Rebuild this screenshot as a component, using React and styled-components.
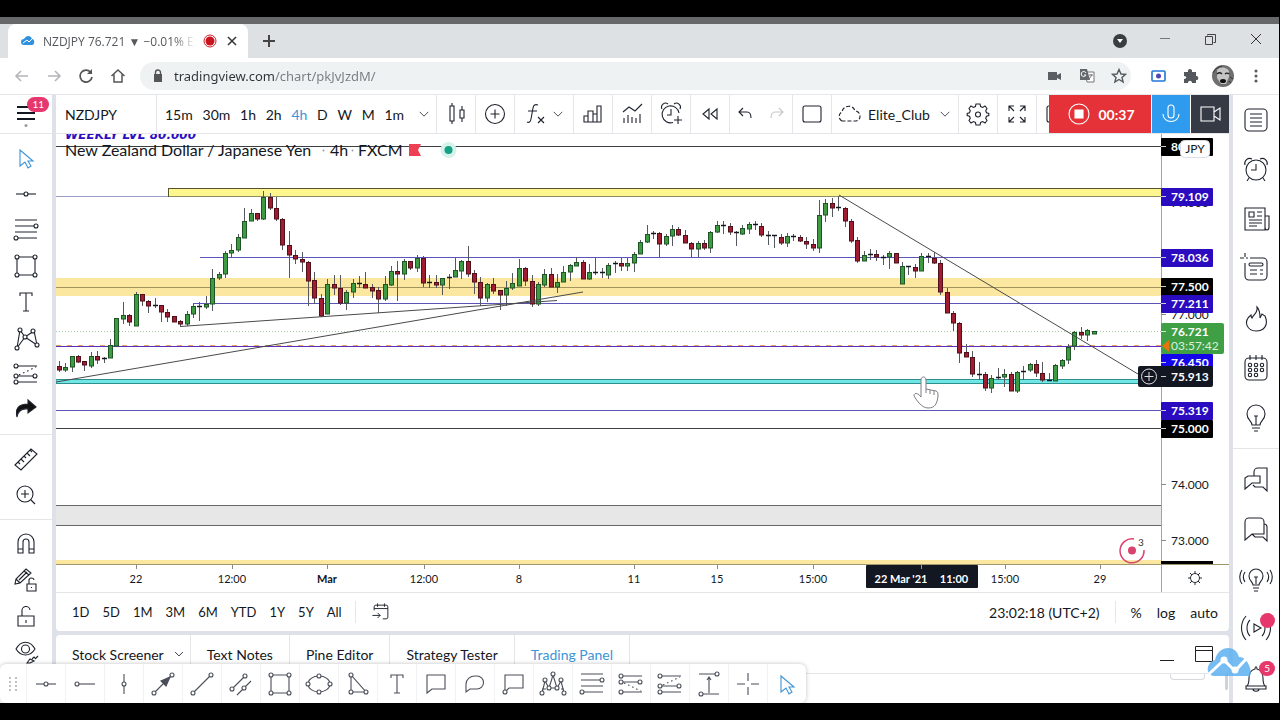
import React from 'react';
import styled, { createGlobalStyle } from 'styled-components';

const colors = {
  text: '#131722',
  blue: '#3d94d6',
  gutter: '#dee2e8',
  line: '#e4e6ea',
  pink: '#e6386c',
  candleUp: '#3f9a44',
  candleDown: '#a01c30',
  level: '#2a0bbf',
};

const GlobalStyle = createGlobalStyle`
  * {
    box-sizing: border-box;
  }

  body {
    margin: 0;
    background: #000;
    color: ${colors.text};
    font-family: Lato, 'Liberation Sans', sans-serif;
    font-size: 14px;
  }

  button {
    margin: 0;
    padding: 0;
    border: 0;
    background: none;
    color: inherit;
    font: inherit;
    cursor: pointer;
  }
`;

const Screen = styled.div`
  display: flex;
  flex-direction: column;
  height: 100vh;
  padding: 17px 1px 17px 0;
  overflow: hidden;
`;

/* ---------- browser ---------- */

const Backdrop = styled.div`
  flex: none;
  height: 7px;
  background: #66696a;
`;

const TabStrip = styled.div`
  display: flex;
  flex: none;
  align-items: center;
  height: 34px;
  padding-left: 8px;
  background: #dee1e3;
`;

const BrowserTab = styled.div`
  display: flex;
  align-items: center;
  width: 240px;
  height: 34px;
  padding: 0 9px 0 13px;
  gap: 8px;
  background: #fff;
  border-radius: 8px 8px 0 0;
  color: #55585c;
  font-family: 'Open Sans', sans-serif;
  font-size: 12px;

  button {
    display: flex;
  }
`;

const TabTitle = styled.span`
  flex: 1;
  overflow: hidden;
  white-space: nowrap;
  mask-image: linear-gradient(90deg, #000 86%, transparent);
`;

const NewTab = styled.button`
  display: flex;
  margin-left: 13px;
`;

const WindowButtons = styled.div`
  display: flex;
  align-items: center;
  gap: 30px;
  margin-left: auto;
  padding-right: 15px;

  button {
    display: flex;
  }
`;

const AddressRow = styled.div`
  display: flex;
  flex: none;
  align-items: center;
  height: 37px;
  padding: 0 13px;
  background: #fff;
  border-bottom: 1px solid ${colors.line};
`;

const NavButtons = styled.div`
  display: flex;
  gap: 14px;

  button {
    display: flex;
  }
`;

const AddressBar = styled.div`
  display: flex;
  flex: 1;
  align-items: center;
  height: 28px;
  margin-left: 13px;
  padding: 0 2px 0 10px;
  gap: 8px;
  background: #eff2f3;
  border-radius: 14px;
`;

const AddressInput = styled.input`
  flex: 1;
  min-width: 0;
  padding: 0;
  border: 0;
  outline: 0;
  background: linear-gradient(90deg, #303336 101px, #777b80 101px);
  background-clip: text;
  color: transparent;
  font-family: 'Noto Sans', sans-serif;
  font-size: 13px;
`;

const BarActions = styled.div`
  display: flex;
  gap: 12px;

  button {
    display: flex;
  }
`;

const Extensions = styled.div`
  display: flex;
  align-items: center;
  gap: 12px;
  margin-left: 17px;

  button {
    display: flex;
  }
`;

/* ---------- chart page ---------- */

const Page = styled.div`
  position: relative;
  display: flex;
  flex: 1;
  gap: 4px;
  min-height: 0;
  background: ${colors.gutter};
`;

const Side = styled.div`
  display: flex;
  flex-direction: column;
  flex: none;
  width: ${({ $width }) => $width}px;
  min-height: 0;
  background: #fff;
`;

const MenuButton = styled.button`
  position: relative;
  height: 39px;
  border-bottom: 1px solid ${colors.line} !important;
`;

const Badge = styled.span`
  position: absolute;
  top: ${({ $top }) => $top}px;
  right: ${({ $right }) => $right}px;
  min-width: 15px;
  height: 15px;
  padding: 0 5px;
  border-radius: 8px;
  background: ${colors.pink};
  color: #fff;
  font-size: 10px;
  line-height: 15px;
`;

const LeftTools = styled.div`
  display: flex;
  flex-direction: column;
  padding-top: 6px;
`;

const SideButton = styled.button`
  position: relative;
  display: flex;
  flex: 0 1 ${({ $height }) => $height}px;
  align-items: center;
  justify-content: center;
  min-height: 0;
`;

const SideLine = styled.hr`
  width: 100%;
  margin: ${({ $gap }) => $gap}px 0;
  border: 0;
  border-top: 1px solid ${colors.line};
`;

const Center = styled.div`
  display: flex;
  flex: 1;
  flex-direction: column;
  gap: 4px;
  min-width: 0;
  min-height: 0;
`;

const ChartPanel = styled.div`
  display: flex;
  flex: 1;
  flex-direction: column;
  min-height: 0;
  background: #fff;
  border-radius: 0 0 4px 4px;
`;

const TopBar = styled.div`
  position: relative;
  display: flex;
  flex: none;
  height: 39px;
  overflow: hidden;
  border-bottom: 1px solid ${colors.line};
`;

const Cell = styled.div`
  display: flex;
  flex: none;
  align-items: center;
  justify-content: ${({ $spread }) => ($spread ? 'space-between' : 'center')};
  width: ${({ $width }) => $width}px;
  padding: ${({ $spread }) => ($spread ? '0 2px 0 8px' : '0')};
  border-right: 1px solid ${colors.line};

  button {
    display: flex;
    align-items: center;
    justify-content: center;
  }
`;

const SymbolButton = styled.button`
  flex: none;
  width: 101px;
  padding-left: 9px !important;
  border-right: 1px solid ${colors.line} !important;
  text-align: left;
`;

const Interval = styled.button`
  color: ${({ $active }) => ($active ? colors.blue : colors.text)} !important;
`;

const LayoutButton = styled.button`
  gap: 5px;
`;

const Recorder = styled.div`
  position: absolute;
  top: 0;
  right: 0;
  display: flex;
  gap: 1px;
  height: 38px;
  background: #fff;
`;

const RecorderButton = styled.button`
  display: flex;
  align-items: center;
  justify-content: center;
  width: ${({ $width }) => $width}px;
  gap: 5px;
  background: ${({ $color }) => $color} !important;
  color: #fff !important;
  font-weight: 700 !important;
`;

const ChartSvg = styled.svg`
  display: block;
  flex: 1;
  width: 100%;
  min-height: 0;
  font-family: Lato, sans-serif;
`;

const RangeBar = styled.div`
  display: flex;
  flex: none;
  align-items: center;
  height: 39px;
  padding: 0 11px 0 16px;
  border-top: 1px solid ${colors.line};
`;

const RangeGroup = styled.div`
  display: flex;
  align-items: center;
  gap: ${({ $gap }) => $gap}px;
  font-size: ${({ $size }) => $size}px;

  button {
    display: flex;
  }
`;

const RangeLine = styled.span`
  width: 1px;
  height: 22px;
  background: ${colors.line};
`;

const Spacer = styled.span`
  flex: 1;
`;

const BottomPanel = styled.div`
  flex: none;
  height: 68px;
  background: #fff;
  border-radius: 4px 4px 0 0;
`;

const PanelTabs = styled.div`
  display: flex;
  height: 39px;
  border-bottom: 1px solid ${colors.line};
`;

const PanelTab = styled.button`
  display: flex;
  align-items: center;
  padding: 0 ${({ $menu }) => ($menu ? 2 : 16)}px 0 16px !important;
  gap: 6px;
  border-right: 1px solid ${colors.line} !important;
  color: ${({ $active }) => ($active ? colors.blue : colors.text)} !important;
`;

const PanelActions = styled.div`
  display: flex;
  align-items: center;
  gap: 14px;
  margin-left: auto;
  padding-right: 13px;

  button {
    display: flex;
  }
`;

const PanelBody = styled.div`
  display: flex;
  align-items: flex-start;
  justify-content: flex-end;
  gap: 20px;
  padding-right: 1px;
`;

const GhostBox = styled.span`
  width: 35px;
  height: 6px;
  border: 1px solid #d6d8dc;
  border-top: 0;
  border-radius: 0 0 4px 4px;
`;

const ScrollThumb = styled.span`
  width: 3px;
  height: 16px;
  background: #cfd2d8;
  border-radius: 0 0 2px 2px;
`;

const Favorites = styled.div`
  position: absolute;
  left: 0;
  bottom: 0;
  display: flex;
  height: 39px;
  background: #fff;
  border-radius: 6px;
  box-shadow: 0 0 4px rgba(0, 0, 0, 0.25);
  clip-path: inset(-6px -6px 0 0);
`;

const FavoriteButton = styled.button`
  display: flex;
  align-items: center;
  justify-content: center;
  width: ${({ $width }) => $width || 39}px;

  & + & {
    border-left: 1px solid #f1f2f4;
  }
`;

const Watermark = styled.svg`
  position: absolute;
  right: 26px;
  bottom: 26px;
  opacity: 0.85;
`;

/* ---------- icons ---------- */

const Dot = ({ x, y, r = 2 }) => <circle cx={x} cy={y} r={r} fill="#fff" />;

const icons = {
  cursor: <path d="M8 6v16l5-4 3 6 3-2-3-5h5z" />,
  hline: (
    <>
      <path d="M4 14h20" />
      <Dot x={14} y={14} />
    </>
  ),
  ray: (
    <>
      <path d="M6 14h18" />
      <Dot x={6} y={14} />
    </>
  ),
  vline: (
    <>
      <path d="M14 4v20" />
      <Dot x={14} y={14} />
    </>
  ),
  fib: (
    <>
      <path d="M3 4h22M3 10h20M3 16h22M5 22h20" />
      <Dot x={24} y={10} />
      <Dot x={4} y={22} />
    </>
  ),
  rect: (
    <>
      <path d="M5 5h18v18H5z" />
      <Dot x={5} y={5} />
      <Dot x={23} y={5} />
      <Dot x={5} y={23} />
      <Dot x={23} y={23} />
    </>
  ),
  text: <path d="M8 8V5h12v3M14 5v18m-3 0h6" />,
  pattern: (
    <>
      <path d="m5 24 3-18 5 7 9-6 3 14-12-8z" />
      <Dot x={5} y={24} />
      <Dot x={8} y={6} />
      <Dot x={13} y={13} />
      <Dot x={21} y={7} />
      <Dot x={25} y={21} />
    </>
  ),
  forecastLong: (
    <>
      <path d="M5 6h20M5 12h18M5 22h20" />
      <path d="m7 13 17 8" strokeDasharray="1.5 3" />
      <Dot x={4} y={6} />
      <Dot x={4} y={12} />
      <Dot x={23} y={12} />
      <Dot x={4} y={22} />
    </>
  ),
  forecast: (
    <>
      <path d="M5 6h20M5 16h18M5 22h20" />
      <path d="m7 15 17-8" strokeDasharray="1.5 3" />
      <Dot x={4} y={6} />
      <Dot x={4} y={16} />
      <Dot x={23} y={16} />
      <Dot x={4} y={22} />
    </>
  ),
  arrowMark: (
    <path d="M5 21c-2-8 1-13 11-13V4l8 7-8 6v-4c-7-1-10 2-11 8z" fill="#111" />
  ),
  ruler: <path d="M3 20 19 4l6 5L9 25zm3-3 2 2m1-5 3 3m0-6 2 2m1-5 3 3m0-6 2 2" />,
  zoom: <path d="M21 13a8 8 0 1 1-16 0 8 8 0 0 1 16 0zm-2 6 4 4m-14-10h8m-4-4v8" />,
  magnet: <path d="M6 23V12a8 8 0 0 1 16 0v11h-5V12a3 3 0 0 0-6 0v11zm0-4h5m6 0h5" />,
  pencilLock: (
    <>
      <path d="m3 18 1-5L14 3l5 4L8 17zm1-5 4 4m4-12 5 4M7 14l8-8" />
      <path d="M15 18h9v7h-9zm2 0v-3a2.500 2.500 0 0 1 5-1m-2.500 7v1" />
    </>
  ),
  lock: <path d="M6 14h16v10H6zm4 0V9a4 4 0 0 1 8-1m-4 10v3" />,
  eye: (
    <>
      <path d="M4 11c5-9 14-9 19 0-5 8-14 8-19 0z" />
      <circle cx={13.5} cy={11} r={4} />
      <path d="m15 25 3-4 4 2-4 2zm5-4 2-2 2 2m0-1 2-2" />
    </>
  ),
  // top bar
  candles: <path d="M8 6h4v15H8zm2-3v3m0 15v3m8-14h4v8h-4zm2-4v4m0 8v4" />,
  compare: <path d="M23.500 14a9.500 9.500 0 1 1-19 0 9.500 9.500 0 0 1 19 0zM14 9.500v9m-4.500-4.500h9" />,
  fx: <path d="M18 5c-3-1-4.500 0-5 3l-2 11c-.5 3-2 4-4 3m1-11h9m1 6 6 6m0-6-6 6" />,
  chevron: <path d="m8 11 6 6 6-6" />,
  financials: <path d="M5 22v-6h4v6zm4 0V11h5v11zm5 0v-8h4v8zm4 0V6h4v16z" />,
  templates: <path d="m5 12 6-5 6 4 7-7M6 23v-5m4 5v-8m4 8v-6m4 6v-5m4 5v-9" />,
  alertAdd: (
    <>
      <path d="M22 13a8.500 8.500 0 1 0-6 9.500M14 9v6h-4M5 9a4 4 0 0 1 6-5m6 0a4 4 0 0 1 6 5" />
      <path d="M21 16v8m-4-4h8" />
    </>
  ),
  rewind: <path d="M13 9v10l-6-5zm8 0v10l-6-5z" />,
  undo: <path d="m10 8-4 4 4 4m-4-4h8c3 0 4 2 4 6" />,
  redo: <path d="m18 8 4 4-4 4m4-4h-8c-3 0-4 2-4 6" />,
  square: <rect x={5} y={6} width={18} height={16} rx={2} />,
  cloud: (
    <path
      d="M7 21a5 5 0 0 1 0-9c1-7 11-8 13-1 6 0 7 9 1 10z"
      strokeDasharray="4 2"
    />
  ),
  gear: (
    <>
      <path d="m12 4 4 0 .6 2.500 2 .9L21 6l2 2.500-1.300 2.300.8 2 2.300.7v2l-2.300.7-.8 2L23 20.500 21 23l-2.400-1.400-2 .9L16 25h-4l-.6-2.500-2-.9L7 23l-2-2.500 1.300-2.300-.8-2L3.200 15.500v-2l2.300-.7.8-2L5 8.500 7 6l2.400 1.400 2-.9z" />
      <circle cx={14} cy={14.5} r={2.5} />
    </>
  ),
  fullscreen: (
    <path d="M6 11V6h5M6 6l5 5m6-5h5v5m0-5-5 5M6 17v5h5m-5 0 5-5m11 0v5h-5m5 0-5-5" />
  ),
  mic: <path d="M11 8a3 3 0 0 1 6 0v7a3 3 0 0 1-6 0zM6 14c0 10 16 10 16 0" />,
  camera: <path d="M5 7h13v14H5zm13 5 6-4v12l-6-4" />,
  stop: (
    <>
      <circle cx={14} cy={14} r={10} />
      <path d="M10 10h8v8h-8z" fill="#fff" />
    </>
  ),
  goto: (
    <path d="M6 12V8a2 2 0 0 1 2-2h12a2 2 0 0 1 2 2v12a2 2 0 0 1-2 2h-4M6 10h16M10 4v4m8-4v4M4 18h9m-3-3 3 3-3 3" />
  ),
  // right bar
  watchlist: (
    <>
      <rect x={3} y={3} width={22} height={22} rx={4} />
      <path d="M8 8h12M8 12h12M8 16h12M8 20h12" />
    </>
  ),
  alarm: (
    <>
      <circle cx={14} cy={14} r={10} />
      <path d="M14 8v6H9M3 9a5 5 0 0 1 7-6m8 0a5 5 0 0 1 7 6M7 22l-2 3m16-3 2 3" />
    </>
  ),
  news: (
    <path d="M3 3h20v22H3zm20 8h4v11c0 4-4 4-4 0M7 7h5v5H7zm8 0h5m-5 4h5M7 15h13M7 18h13M7 21h8" />
  ),
  dataWindow: (
    <>
      <path d="M8 3h13a4 4 0 0 1 4 4v14a4 4 0 0 1-4 4H7a4 4 0 0 1-4-4V8M3-2v4m-5 1h4m2 0h2" />
      <rect x={7} y={8} width={14} height={3} rx={1.5} />
      <path d="M8 15h7m3 0h3M8 19h7m3 0h3" />
    </>
  ),
  hot: <path d="M15 2c1 6-3 7-5 11-1-1-1-3-1-3-9 7-3 16 5 16s13-6 9-15l-3-2-2 4c0-4 0-8-3-11z" />,
  calendar: (
    <>
      <rect x={3} y={3} width={22} height={22} rx={4} />
      <path d="M8 0v5m6-5v5m6-5v5" />
      {[10, 15, 20].map((y) =>
        [8, 14, 20]
          .slice(0, y === 20 ? 2 : 3)
          .map((x) => <circle key={`${x}-${y}`} cx={x} cy={y} r={1.7} />),
      )}
    </>
  ),
  bulb: (
    <path d="M10 21c0-4-5-5-5-11a9 9 0 0 1 18 0c0 6-5 7-5 11zm0 3h8m-6 3h4m-4-15h4m-2 0v9" />
  ),
  chats: (
    <path d="M7 3h11a4 4 0 0 1 4 4v12H10l-7 6V7a4 4 0 0 1 4-4zm15 6c2 0 3 1 3 3v14l-4-4h-8l-3-3" />
  ),
  chatsOpen: (
    <path d="M12 11V7a4 4 0 0 1 4-4h9v11m0 0v12l-4-4h-8l-2-2M6 11h12v7h-8l-7 6V13z" />
  ),
  ideas: (
    <path d="M11 20c0-3-4-4-4-9a7 7 0 0 1 14 0c0 5-4 6-4 9zm0 3h6m-5 3h4m-4-14h4m-2 0v7M3 7c-2 3-2 7 0 10m22-10c2 3 2 7 0 10M0 5c-3 4-3 10 0 14M28 5c3 4 3 10 0 14" />
  ),
  stream: (
    <path d="m12 10 7 4-7 4zM8 6c-4 4-4 12 0 16M20 6c4 4 4 12 0 16M4 2c-6 7-6 17 0 24M24 2c6 7 6 17 0 24" />
  ),
  bell: <path d="M5 22c2-2 2-4 2-8 0-5 2-8 6-9 0-3 2-3 2 0 4 1 6 4 6 9 0 4 0 6 2 8zm-1 0h20v3H4zm7 3c0 3 6 3 6 0" />,
  // favourites
  arrowLine: (
    <>
      <path d="M5 23 23 5" />
      <path d="m21 7-9 4 5 5z" fill="#4a4e58" />
      <Dot x={5} y={23} />
      <Dot x={23} y={5} />
    </>
  ),
  trend: (
    <>
      <path d="M5 23 23 5" />
      <Dot x={5} y={23} />
      <Dot x={23} y={5} />
    </>
  ),
  channel: (
    <>
      <path d="M5 19 18 6m-8 19 14-14" />
      <Dot x={5} y={19} />
      <Dot x={18} y={6} />
      <Dot x={17} y={18} />
    </>
  ),
  ellipse: (
    <>
      <ellipse cx={14} cy={14} rx={11} ry={8} />
      <Dot x={3} y={14} />
      <Dot x={25} y={14} />
      <Dot x={14} y={6} />
      <Dot x={14} y={22} />
    </>
  ),
  triangle: (
    <>
      <path d="M7 5v17h15z" />
      <Dot x={7} y={5} />
      <Dot x={7} y={22} />
      <Dot x={22} y={22} />
    </>
  ),
  callout: <path d="M5 5h18v14H10l-5 4z" />,
  balloon: <path d="M5 22v-8a9 8 0 0 1 9-8h2a6 6 0 0 1 0 13h-7z" />,
  note: (
    <>
      <path d="M5 22V5h18v13H9z" />
      <Dot x={5} y={22} />
    </>
  ),
  elliott: (
    <>
      <path d="m3 23 3-12 4 7 4-13 4 13 4-7 3 12M3 19h4m3-1h8m4 1h3" />
      <Dot x={3} y={23} />
      <Dot x={6} y={10} />
      <Dot x={10} y={18} />
      <Dot x={14} y={4} />
      <Dot x={18} y={18} />
      <Dot x={22} y={10} />
      <Dot x={25} y={23} />
    </>
  ),
  range: (
    <>
      <path d="M4 4h19M6 24h18M14 23V7m-2 3 2-3 2 3" />
      <Dot x={22} y={4} />
      <Dot x={6} y={24} />
    </>
  ),
  cross: <path d="M14 3v8m0 6v8M3 14h8m6 0h8" />,
};

const Icon = ({ name, size = 28, color = '#1e222d', width = 1.1 }) => (
  <svg
    width={size}
    height={size}
    viewBox="0 0 28 28"
    fill="none"
    stroke={color}
    strokeWidth={width}
    overflow="visible"
    aria-hidden="true"
  >
    {icons[name]}
  </svg>
);

/* ---------- chart data ---------- */

// type, high, body top, body bottom, low (chart pixels), one bar per entry
const bars = `
r361,366,370,372 g363,367,370,372 g356,356,367,372 r355,356,362,363 r361,361,365,371
g352,356,366,368 r351,356,360,364 g357,358,360,363 g339,345,358,358 g318,318,346,346
g302,315,319,324 r314,315,322,326 g292,294,326,326 r294,294,301,306 r300,301,306,313
d298,305,306,308 r305,305,312,322 r309,312,317,322 r316,316,322,322 r320,321,324,326
g311,314,324,326 g304,306,314,318 d302,306,307,321 g296,304,307,309 g269,278,304,311
g272,274,278,280 g251,253,274,278 g244,250,253,258 g234,237,250,252 g208,221,238,238
g209,213,221,221 r213,213,219,221 g191,197,219,220 r193,197,208,210 r197,208,219,221
r218,219,245,250 r231,245,255,278 r250,255,259,264 r252,259,262,272 r261,262,281,306
r272,280,298,304 r294,298,316,317 g279,284,314,314 r275,284,288,295 r275,288,303,305
g290,292,303,310 g279,283,292,298 d276,283,285,288 r272,284,288,288 r284,287,291,298
r287,290,299,313 g276,284,299,301 g266,271,285,286 r261,271,274,301 g259,261,274,280
r261,261,268,270 g255,258,268,272 r256,258,283,287 d275,282,283,288 r275,282,285,288
g278,278,285,295 d274,277,278,289 g258,270,277,277 g260,261,271,279 r246,261,274,277
r270,273,282,294 r277,282,298,306 g283,284,298,302 r278,284,291,294 r290,290,295,310
g281,288,295,306 g273,283,288,290 g259,268,286,286 r267,268,281,286 r275,281,304,307
g282,284,304,306 g269,274,285,287 r268,274,287,287 g274,282,287,293 g266,272,282,282
g264,265,272,281 g257,262,266,266 r260,262,279,279 g264,272,279,280 d258,272,273,275
r268,272,274,278 g263,265,275,279 d261,263,264,273 r258,263,266,271 g258,263,266,271
g252,254,263,272 g240,242,254,254 g225,234,242,243 d231,233,235,239 r232,233,244,257
g234,236,244,246 g225,229,236,246 r227,229,235,236 r230,235,243,243 r242,243,249,257
g241,243,249,257 r240,243,248,250 g231,232,248,253 g221,225,232,233 d221,225,226,234
r223,226,232,235 r231,232,234,246 g225,228,234,235 g222,224,229,234 r221,224,226,230
r223,226,235,237 d231,235,236,245 d235,235,237,248 r234,237,243,245 g233,236,243,247
d234,236,238,241 r235,237,241,242 r237,241,244,249 r239,244,248,251 g200,215,248,253
g199,203,215,222 r198,203,208,217 d196,207,208,211 r207,208,221,227 r219,221,241,243
r237,240,261,263 g251,255,261,261 d249,254,255,260 r250,254,257,261 d255,257,258,265
g251,253,257,269 r253,253,263,263 g262,266,284,284 d266,266,268,275 r264,267,271,278
g253,256,271,271 d253,256,258,263 r252,258,263,264 r260,263,292,295 r288,292,313,313
r311,313,323,331 r322,323,353,363 r344,352,357,357 r351,357,374,377 d362,374,375,380
r372,374,388,391 g375,378,388,393 d368,377,378,380 g369,374,377,387 r372,374,391,391
g371,372,391,393 d366,371,372,380 g363,364,370,372 r360,364,373,377 r362,373,380,382
d373,380,381,381 g364,365,381,381 g359,360,366,369 g344,347,360,364 g331,332,346,350
r327,332,335,339 g329,330,335,341 g331,331,334,334
`
  .trim()
  .split(/\s+/)
  .map((bar) => [bar[0], ...bar.slice(1).split(',').map(Number)]);

const barFill = { g: colors.candleUp, r: colors.candleDown, d: '#15181f' };

const priceTags = [
  { text: '80.000', y: 147, fill: '#000' },
  { text: '79.109', y: 197, fill: colors.level },
  { text: '78.036', y: 258, fill: colors.level },
  { text: '77.500', y: 287, fill: '#000' },
  { text: '77.211', y: 304, fill: colors.level },
  { text: '76.450', y: 363, fill: '#1406e8' },
  { text: '75.319', y: 411, fill: colors.level },
  { text: '75.000', y: 429, fill: '#000' },
];

const prices = [
  { text: '79.000', y: 203 },
  { text: '77.000', y: 315 },
  { text: '74.000', y: 485 },
  { text: '73.000', y: 541 },
];

const times = [
  [136, '22'],
  [232, '12:00'],
  [327, 'Mar'],
  [424, '12:00'],
  [519, '8'],
  [634, '11'],
  [717, '15'],
  [813, '15:00'],
  [1005, '15:00'],
  [1100, '29'],
];

const HLine = ({ y, from = 56, to = 1161, color = '#3d3f44', ...rest }) => (
  <path d={`M${from} ${y}H${to}`} stroke={color} {...rest} />
);

const Candles = () =>
  bars.map(([type, high, top, bottom, low], i) => {
    const x = Math.round(59.4 + i * 6.387 - 0.5) + 0.5;
    return (
      <g key={i}>
        <path d={`M${x} ${high}V${low}`} stroke="#55585e" />
        {bottom - top < 3 ? (
          <path d={`M${x - 2.5} ${top + 0.5}h5`} stroke="#15181f" strokeWidth={1.5} />
        ) : (
          <rect
            x={x - 2}
            y={top + 0.5}
            width={4}
            height={bottom - top - 0.5}
            fill={barFill[type]}
            stroke={type === 'g' ? '#1f5425' : '#4f1019'}
          />
        )}
      </g>
    );
  });

const Chart = () => (
  <ChartSvg viewBox="56 134 1173 458" preserveAspectRatio="xMinYMin meet">
    <HLine y={146.5} />
    <text x={65} y={139} fill="#2c0fc0" fontSize={12} fontWeight={700} fontStyle="italic" fontFamily="DejaVu Sans">
      WEEKLY LVL 80.000
    </text>
    <rect x={56} y={278} width={1105} height={18} fill="#fbe7a0" />
    <HLine y={287.5} color="#a3935c" />
    <HLine y={196.5} color="#9c9cc8" />
    <rect x={168.5} y={188.5} width={993} height={8} fill="#fdf68e" stroke="#55532c" />
    <HLine y={196.5} from={169} color="#8f8c66" />
    <HLine y={257.5} from={200} color="#5a54bb" />
    <HLine y={303.5} from={193} color="#5a54bb" />
    <HLine y={331.5} color="#a5cfa8" strokeDasharray="1 2" />
    <HLine y={345.5} color="#e0a860" strokeDasharray="5 6" />
    <HLine y={346.5} color="#5a2fc0" />
    <rect x={56} y={379.5} width={1106} height={4} fill="#72e6e4" stroke="#2c8f90" />
    <HLine y={410.5} color="#5a54bb" />
    <HLine y={428.5} />
    <rect x={56} y={505} width={1105} height={21} fill="#e7e7e7" />
    <HLine y={505.5} color="#66686c" />
    <HLine y={525.5} color="#66686c" />
    <rect x={56} y={560} width={1105} height={4} fill="#fbe7a0" />

    <Candles />

    <g stroke="#4a4a4a" fill="none">
      <path d="M180 326.500 557 300.500M56 382l527-90M839 195l304 182" />
    </g>

    <g fontSize={16} fill={colors.text}>
      <text x={65} y={156}>New Zealand Dollar / Japanese Yen</text>
      <text x={330} y={156}>4h</text>
      <text x={358} y={156}>FXCM</text>
    </g>
    <circle cx={323.5} cy={150.5} r={1} fill="#9a9da5" />
    <circle cx={352.5} cy={150.5} r={1} fill="#9a9da5" />
    <path d="M409 144h12l-3 6 3 6h-12z" fill="#ee4055" />
    <circle cx={448.500} cy={150} r={8} fill="#d7f2ea" />
    <circle cx={448.500} cy={150} r={4} fill="#16a085" />

    <path d="M1144 550a12 12 0 1 1-10-11" fill="none" stroke="#d8436f" strokeWidth={1.5} />
    <circle cx={1132} cy={550.5} r={4} fill="#d8436f" />
    <text x={1138} y={546} fontSize={10} fill="#333">3</text>

    {/* price scale */}
    <path d="M1161.500 134V592" stroke="#a2a4a8" />
    <g fontSize={12}>
      {prices.map(({ text, y }) => (
        <g key={text}>
          <HLine y={y - 0.5} from={1161} to={1166} color="#888" />
          <text x={1171} y={y + 4} fill={colors.text}>{text}</text>
        </g>
      ))}
      {priceTags.map(({ text, y, fill }) => (
        <g key={text}>
          <rect x={1161} y={y - 9} width={52} height={18} rx={1} fill={fill} />
          <HLine y={y - 0.5} from={1161} to={1166} color="#ccc" />
          <text x={1171} y={y + 4} fill="#fff" fontWeight={700}>{text}</text>
        </g>
      ))}
      <rect x={1180.5} y={140.5} width={29} height={17} rx={4} fill="#fff" stroke="#dcdee3" />
      <text x={1195} y={153} textAnchor="middle" fill={colors.text}>JPY</text>

      <rect x={1161} y={323} width={63} height={31} rx={2} fill="#3f9f45" />
      <HLine y={331.5} from={1161} to={1166} color="#d6ead7" />
      <text x={1171} y={336} fill="#fff" fontWeight={700}>76.721</text>
      <text x={1171} y={350} fill="#dcefdc">03:57:42</text>
      <path d="m1162 346 7-6v12z" fill="#e8730c" />

      <rect x={1138} y={366} width={75} height={21} rx={2} fill={colors.text} />
      <HLine y={376.5} from={1161} to={1166} color="#ccc" />
      <text x={1171} y={381} fill="#fff" fontWeight={700}>75.913</text>
      <circle cx={1149} cy={376.5} r={7.5} fill="none" stroke="#e0e0e0" />
      <path d="M1149 372v9m-4.500-4.500h9" stroke="#e0e0e0" />
      <rect x={1161} y={561} width={52} height={4} fill="#000" />
    </g>

    {/* time scale */}
    <HLine y={564.5} to={1229} color="#a2976c" />
    <g fontSize={11} textAnchor="middle" fill={colors.text}>
      {times.map(([x, text]) => (
        <g key={x}>
          <path d={`M${x + 0.5} 565v4`} stroke="#888" />
          <text x={x} y={583} fontWeight={text === 'Mar' ? 700 : 400}>{text}</text>
        </g>
      ))}
      <rect x={866} y={565} width={112} height={23} rx={1} fill={colors.text} />
      <path d="M921.500 565v4" stroke="#999" />
      <text x={901} y={583} fill="#fff" fontWeight={700}>22 Mar &apos;21</text>
      <text x={954} y={583} fill="#fff" fontWeight={700}>11:00</text>
    </g>
    <g stroke="#2a2e39" fill="none">
      <circle cx={1195} cy={578} r={4.5} />
      <path d="M1195 571v2.500m0 9v2.500m-7-7h2.500m9 0h2.500m-12-5 2 2m6 6 2 2m0-10-2 2m-6 6-2 2" />
    </g>

    {/* pointer */}
    <path
      d="M921 397V380c0-4 5-4 5 0v9l10 2c2 1 2 2 2 5-1 8-3 12-10 12-6 0-11-7-14-12 0-4 4-3 7 1z"
      fill="#fff"
      stroke="#7c7e84"
    />
    <path d="M926 389v4m4-3v4m4-3v4" stroke="#7c7e84" />
  </ChartSvg>
);

/* ---------- sections ---------- */

const Browser = () => (
  <>
    <Backdrop />
    <TabStrip>
      <BrowserTab>
        <svg width="14" height="10" viewBox="0 0 14 10">
          <path d="M3 9a3 3 0 0 1 0-6c2-4 7-4 8 0 3 0 3 6 0 6z" fill="#3291dd" />
          <path d="m2 7 4-3 2 2 3-3" stroke="#fff" fill="none" />
        </svg>
        <TabTitle>NZDJPY 76.721 ▼ −0.01% Eli</TabTitle>
        <svg width="14" height="14" viewBox="0 0 14 14">
          <circle cx="7" cy="7" r="6" fill="#fff" stroke="#d3202c" />
          <circle cx="7" cy="7" r="4.500" fill="#c9131f" />
        </svg>
        <button aria-label="Close tab">
          <svg width="14" height="14" viewBox="0 0 14 14" stroke="#333" strokeWidth="1.5">
            <path d="m3 3 8 8m0-8-8 8" />
          </svg>
        </button>
      </BrowserTab>
      <NewTab aria-label="New tab">
        <svg width="16" height="16" viewBox="0 0 16 16" stroke="#444" strokeWidth="2">
          <path d="M8 2v12M2 8h12" />
        </svg>
      </NewTab>
      <WindowButtons>
        <button aria-label="Search tabs">
          <svg width="16" height="16" viewBox="0 0 16 16">
            <circle cx="8" cy="8" r="7" fill="#3a3d40" />
            <path d="M5 6h6l-3 4z" fill="#fff" />
          </svg>
        </button>
        <button aria-label="Minimize">
          <svg width="14" height="14" viewBox="0 0 14 14" stroke="#777">
            <path d="M2 4.500h10" />
          </svg>
        </button>
        <button aria-label="Restore">
          <svg width="16" height="16" viewBox="0 0 16 16" stroke="#444" fill="none">
            <path d="M3.500 3.500h7v8h-7zm2-1v-1h8v8h-2" />
          </svg>
        </button>
        <button aria-label="Close">
          <svg width="16" height="16" viewBox="0 0 16 16" stroke="#333">
            <path d="m3 1 10 10m0-10L3 11" />
          </svg>
        </button>
      </WindowButtons>
    </TabStrip>
    <AddressRow>
      <NavButtons>
        <button aria-label="Back">
          <svg width="18" height="18" viewBox="0 0 18 18" stroke="#b2b4b7" fill="none" strokeWidth="1.5">
            <path d="M15 9H3m5-5L3 9l5 5" />
          </svg>
        </button>
        <button aria-label="Forward">
          <svg width="18" height="18" viewBox="0 0 18 18" stroke="#b2b4b7" fill="none" strokeWidth="1.5">
            <path d="M3 9h12m-5-5 5 5-5 5" />
          </svg>
        </button>
        <button aria-label="Reload">
          <svg width="18" height="18" viewBox="0 0 18 18" stroke="#555" fill="none" strokeWidth="1.7">
            <path d="M13.500 5A6 6 0 1 0 15 10" />
            <path d="M15 2v5h-5z" fill="#555" stroke="none" />
          </svg>
        </button>
        <button aria-label="Home">
          <svg width="18" height="18" viewBox="0 0 18 18" stroke="#555" fill="none" strokeWidth="1.5">
            <path d="M2.500 9 9 3l6.500 6M5 7.500V15h8V7.500" />
          </svg>
        </button>
      </NavButtons>
      <AddressBar>
        <svg width="16" height="16" viewBox="0 0 16 16">
          <path d="M4 6h8v8H4z" fill="#555" />
          <path d="M5.500 6V4.500a2.500 2.500 0 0 1 5 0V6" stroke="#555" fill="none" strokeWidth="1.4" />
        </svg>
        <AddressInput aria-label="Address" defaultValue="tradingview.com/chart/pkJvJzdM/" />
        <BarActions>
          <button aria-label="Camera">
            <svg width="20" height="20" viewBox="0 0 20 20" fill="#5b5e62">
              <path d="M3 6h9v3l4-2v7l-4-2v2H3z" />
            </svg>
          </button>
          <button aria-label="Translate">
            <svg width="20" height="20" viewBox="0 0 20 20">
              <path d="M8 6h9v10h-7z" fill="#fff" stroke="#777" />
              <path d="M3 3h7l3 11H3z" fill="#64676b" />
              <path d="M9 7a2.500 2.500 0 1 0 0 2H7" stroke="#fff" fill="none" />
              <path d="M12 9h4m-2-1v1m-2 4 3-4" stroke="#777" fill="none" />
            </svg>
          </button>
          <button aria-label="Bookmark">
            <svg width="20" height="20" viewBox="0 0 20 20" stroke="#55585c" fill="none" strokeWidth="1.4">
              <path d="m10 3.500 2 4.500 4.500.4-3.500 3 1.100 4.600L10 13.500 5.900 16 7 11.400l-3.500-3L8 8z" />
            </svg>
          </button>
        </BarActions>
      </AddressBar>
      <Extensions>
        <button aria-label="Recorder">
          <svg width="20" height="20" viewBox="0 0 20 20">
            <rect x="4" y="5" width="13" height="10" rx="1" fill="#fff" stroke="#1f78d8" strokeWidth="1.6" />
            <circle cx="10.500" cy="10" r="2.500" fill="#5046b0" />
          </svg>
        </button>
        <button aria-label="Extensions">
          <svg width="20" height="20" viewBox="0 0 20 20" fill="#54575b">
            <path d="M4 6h4c-1-4 5-4 4 0h4v4c3-1 3 5 0 4v3h-4c0-3-4-3-4 0H4v-4c3 0 3-3 0-3z" />
          </svg>
        </button>
        <button aria-label="Profile">
          <svg width="22" height="22" viewBox="0 0 22 22">
            <circle cx="11" cy="11" r="11" fill="#6f6f6f" />
            <path d="M5 5c3-4 10-3 12 1v6l-3 7H9l-4-6z" fill="#c4c4c4" />
            <path d="M5 9c2-2 4-1 5 0m3 0c1-1 3-1 4 0" stroke="#222" fill="none" strokeWidth="1.3" />
            <path d="M1 8c2-4 5-6 9-7M18 12l3 2m-4 2 2 2" stroke="#333" fill="none" />
            <ellipse cx="11" cy="16" rx="3" ry="2" fill="#111" />
          </svg>
        </button>
        <button aria-label="Browser menu">
          <svg width="20" height="20" viewBox="0 0 20 20" fill="#55585c">
            <circle cx="10" cy="5" r="1.500" />
            <circle cx="10" cy="10" r="1.500" />
            <circle cx="10" cy="15" r="1.500" />
          </svg>
        </button>
      </Extensions>
    </AddressRow>
  </>
);

const intervals = ['15m', '30m', '1h', '2h', '4h', 'D', 'W', 'M', '1m'];
const ranges = ['1D', '5D', '1M', '3M', '6M', 'YTD', '1Y', '5Y', 'All'];

const leftTools = [
  ['cursor', 'hline', 'fib', 'rect', 'text', 'pattern', 'forecast', 'arrowMark'],
  ['ruler', 'zoom'],
  ['magnet', 'pencilLock', 'lock', 'eye'],
];

const rightTools = [
  ['watchlist', 'alarm', 'news', 'dataWindow', 'hot', 'calendar', 'bulb'],
  ['chatsOpen', 'chats', 'ideas', 'stream', 'bell'],
];

const favorites = [
  'hline', 'ray', 'vline', 'arrowLine', 'trend', 'channel', 'rect',
  'ellipse', 'triangle', 'text', 'callout', 'balloon', 'note', 'elliott',
  'fib', 'forecastLong', 'forecast', 'range', 'cross', 'cursor',
];

const IconCell = ({ width = 39, names }) => (
  <Cell $width={width}>
    {names.map((name) => (
      <button key={name} aria-label={name}>
        <Icon
          name={name}
          size={name === 'chevron' ? 20 : 28}
          color={name === 'redo' ? '#c4c6cb' : undefined}
        />
      </button>
    ))}
  </Cell>
);

const Toolbar = () => (
  <TopBar>
    <SymbolButton>NZDJPY</SymbolButton>
    <Cell $width={280} $spread>
      {intervals.map((name) => (
        <Interval key={name} $active={name === '4h'}>{name}</Interval>
      ))}
      <button aria-label="More intervals">
        <Icon name="chevron" size={20} />
      </button>
    </Cell>
    <IconCell names={['candles']} />
    <IconCell names={['compare']} />
    <IconCell names={['fx', 'chevron']} width={59} />
    <IconCell names={['financials']} />
    <IconCell names={['templates']} />
    <IconCell names={['alertAdd']} />
    <IconCell names={['rewind']} />
    <IconCell names={['undo', 'redo']} width={63} />
    <IconCell names={['square']} />
    <Cell $width={127}>
      <LayoutButton>
        <Icon name="cloud" />
        Elite_Club
        <Icon name="chevron" size={20} />
      </LayoutButton>
    </Cell>
    <IconCell names={['gear']} />
    <IconCell names={['fullscreen']} />
    <IconCell names={['square']} />
    <Recorder>
      <RecorderButton $width={102} $color="#e53238">
        <Icon name="stop" color="#fff" />
        00:37
      </RecorderButton>
      <RecorderButton $width={38} $color="#2f9bee" aria-label="Microphone">
        <Icon name="mic" color="#fff" />
      </RecorderButton>
      <RecorderButton $width={38} $color="#353a45" aria-label="Camera">
        <Icon name="camera" color="#fff" />
      </RecorderButton>
    </Recorder>
  </TopBar>
);

export default function App() {
  return (
    <Screen>
      <GlobalStyle />
      <Browser />
      <Page>
        <Side $width={52}>
          <MenuButton aria-label="Menu, 11 notifications">
            <svg width="24" height="28" viewBox="0 0 24 28" stroke="#131722" strokeWidth="2">
              <path d="M3 8h11M3 14h18M3 20h18" />
              <circle cx="12" cy="26.500" r="1.500" fill="#999" stroke="none" />
            </svg>
            <Badge $top={2} $right={3}>11</Badge>
          </MenuButton>
          <LeftTools>
            {leftTools.map((group, i) => (
              <React.Fragment key={group[0]}>
                {i > 0 && <SideLine $gap={6} />}
                {group.map((name) => (
                  <SideButton key={name} $height={36} aria-label={name}>
                    <Icon name={name} color={name === 'cursor' ? colors.blue : undefined} />
                  </SideButton>
                ))}
              </React.Fragment>
            ))}
          </LeftTools>
        </Side>

        <Center>
          <ChartPanel>
            <Toolbar />
            <Chart />
            <RangeBar>
              <RangeGroup $gap={13} $size={13}>
                {ranges.map((name) => (
                  <button key={name}>{name}</button>
                ))}
                <RangeLine />
                <button aria-label="Go to date">
                  <Icon name="goto" size={24} />
                </button>
              </RangeGroup>
              <Spacer />
              <RangeGroup $gap={15} $size={14}>
                <button>23:02:18 (UTC+2)</button>
                <RangeLine />
                <button>%</button>
                <button>log</button>
                <button>auto</button>
              </RangeGroup>
            </RangeBar>
          </ChartPanel>

          <BottomPanel>
            <PanelTabs>
              <PanelTab $menu>
                Stock Screener
                <Icon name="chevron" size={18} width={1.4} />
              </PanelTab>
              <PanelTab>Text Notes</PanelTab>
              <PanelTab>Pine Editor</PanelTab>
              <PanelTab>Strategy Tester</PanelTab>
              <PanelTab $active>Trading Panel</PanelTab>
              <PanelActions>
                <button aria-label="Minimize panel">
                  <svg width="22" height="22" viewBox="0 0 22 22" stroke="#222">
                    <path d="M4 17.500h14" />
                  </svg>
                </button>
                <button aria-label="Maximize panel">
                  <svg width="24" height="22" viewBox="0 0 24 22" stroke="#222" fill="none">
                    <path d="M3.500 3.500h17v15h-17zm0 4h17" />
                  </svg>
                </button>
              </PanelActions>
            </PanelTabs>
            <PanelBody>
              <GhostBox />
              <ScrollThumb />
            </PanelBody>
          </BottomPanel>
        </Center>

        <Side $width={46}>
          {rightTools.map((group, i) => (
            <React.Fragment key={group[0]}>
              {i > 0 && <SideLine $gap={5} />}
              {group.map((name) => (
                <SideButton key={name} $height={50} aria-label={name}>
                  <Icon name={name} />
                  {name === 'stream' && <Badge $top={9} $right={4} />}
                  {name === 'bell' && <Badge $top={8} $right={4}>5</Badge>}
                </SideButton>
              ))}
            </React.Fragment>
          ))}
        </Side>

        <Watermark width="46" height="30" viewBox="0 0 46 30">
          <path d="M7 29C-3 27 0 15 8 13 11-2 29-3 32 10c8-1 14 14 11 19z" fill="#5eb1f0" />
          <path d="m2 27 15-14 11 11 12-13" stroke="#fff" strokeWidth="3" fill="none" />
          <circle cx="17" cy="13" r="3.500" fill="#fff" />
          <circle cx="28" cy="23" r="3.500" fill="#fff" />
        </Watermark>

        <Favorites>
          <FavoriteButton $width={26} aria-label="Move toolbar">
            <svg width="12" height="16" viewBox="0 0 12 16" fill="#aaadb5">
              {[2, 6, 10, 14].map((y) => (
                <React.Fragment key={y}>
                  <circle cx="3" cy={y} r="1" />
                  <circle cx="9" cy={y} r="1" />
                </React.Fragment>
              ))}
            </svg>
          </FavoriteButton>
          {favorites.map((name) => (
            <FavoriteButton key={name} aria-label={name}>
              <Icon
                name={name}
                color={name === 'cursor' ? colors.blue : '#4a4e58'}
              />
            </FavoriteButton>
          ))}
        </Favorites>
      </Page>
    </Screen>
  );
}
